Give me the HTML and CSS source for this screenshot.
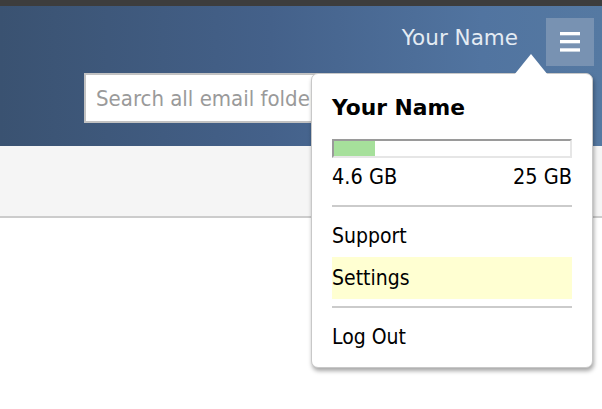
FILE: index.html
```html
<!DOCTYPE html>
<html>
<head>
<meta charset="utf-8">
<link rel="stylesheet" href="styles.css">
</head>
<body>
<div class="topbar"></div>
<header class="header">
  <div class="header-top">
    <span class="user-name">Your Name</span>
    <button class="menu-btn" aria-label="Menu">
      <svg width="20" height="20" viewBox="0 0 20 20"><rect x="0" y="0" width="20" height="3.3" fill="#fff"/><rect x="0" y="8" width="20" height="3.3" fill="#fff"/><rect x="0" y="16.3" width="20" height="3.3" fill="#fff"/></svg>
    </button>
  </div>
  <div class="search-row">
    <input class="search" type="text" placeholder="Search all email folders">
  </div>
</header>
<div class="toolbar"></div>
<div class="content"></div>

<div class="popup">
  <div class="popup-arrow"></div>
  <div class="popup-title">Your Name</div>
  <div class="quota"><div class="quota-fill" style="width:17.5%"></div></div>
  <div class="quota-labels"><span>4.6 GB</span><span>25 GB</span></div>
  <div class="sep"></div>
  <div class="item">Support</div>
  <div class="item item-active">Settings</div>
  <div class="sep sep-2"></div>
  <div class="item">Log Out</div>
</div>
</body>
</html>
```
FILE: styles.css
```css
html, body {
  margin: 0;
  padding: 0;
  background: #fff;
  font-family: "DejaVu Sans Condensed", "DejaVu Sans", sans-serif;
  font-stretch: condensed;
}

.topbar {
  height: 6px;
  background: #3d3d3d;
}

.header {
  height: 140px;
  box-sizing: border-box;
  background: linear-gradient(to right, #3a5271 0%, #44618a 45%, #5174a0 80%, #5579a2 100%);
  padding: 12px 8px 0 0;
}

.header-top {
  display: flex;
  justify-content: flex-end;
  align-items: flex-start;
  height: 48px;
}

.user-name {
  color: #e4ebf3;
  font-family: "DejaVu Sans", sans-serif;
  font-stretch: normal;
  font-size: 21.5px;
  line-height: 24px;
  padding-top: 8px;
  margin-right: 28px;
}

.menu-btn {
  width: 48px;
  height: 48px;
  border: 0;
  padding: 0;
  margin: 0;
  background: #7892b2;
  display: flex;
  align-items: center;
  justify-content: center;
}

.search-row {
  padding: 7px 0 0 84px;
}

.search {
  display: block;
  box-sizing: border-box;
  width: 450px;
  height: 50px;
  border: 2px solid #c2c2c2;
  background: #fff;
  padding: 0 10px;
  font-family: "DejaVu Sans Condensed", "DejaVu Sans", sans-serif;
  font-stretch: condensed;
  font-size: 22px;
  outline: none;
}

.search::placeholder {
  color: #9a9a9a;
}

.toolbar {
  height: 70px;
  background: #f5f5f5;
  border-bottom: 2px solid #cccccc;
  box-shadow: 0 2px 0 #e4e4e4;
}

.popup {
  position: absolute;
  left: 311px;
  top: 73px;
  width: 282px;
  height: 295px;
  box-sizing: border-box;
  background: #fff;
  border: 1px solid #c8c8c8;
  border-radius: 7px;
  box-shadow: 1px 3px 4px rgba(0, 0, 0, 0.35);
  padding: 22px 20px 0 20px;
  color: #000;
}

.popup-arrow {
  position: absolute;
  top: -20px;
  left: 202px;
  width: 0;
  height: 0;
  border-left: 17px solid transparent;
  border-right: 17px solid transparent;
  border-bottom: 21px solid #fff;
}

.popup-title {
  font-family: "DejaVu Sans", sans-serif;
  font-stretch: normal;
  font-weight: bold;
  font-size: 21.8px;
  line-height: 24px;
}

.quota {
  margin-top: 19px;
  height: 19px;
  box-sizing: border-box;
  border-style: solid;
  border-width: 2px;
  border-color: #9a9a9a #e6e6e6 #e6e6e6 #9a9a9a;
  background: #fff;
}

.quota-fill {
  height: 100%;
  background: #a6e09b;
}

.quota-labels {
  display: flex;
  justify-content: space-between;
  margin-top: 7px;
  font-size: 21.5px;
  line-height: 24px;
}

.sep {
  height: 2px;
  background: #cbcbcb;
  margin-top: 16px;
  margin-bottom: 8px;
}

.sep-2 {
  margin-top: 7px;
}

.item {
  height: 42px;
  line-height: 42px;
  font-size: 21px;
}

.item-active {
  background: #ffffd2;
}
```
